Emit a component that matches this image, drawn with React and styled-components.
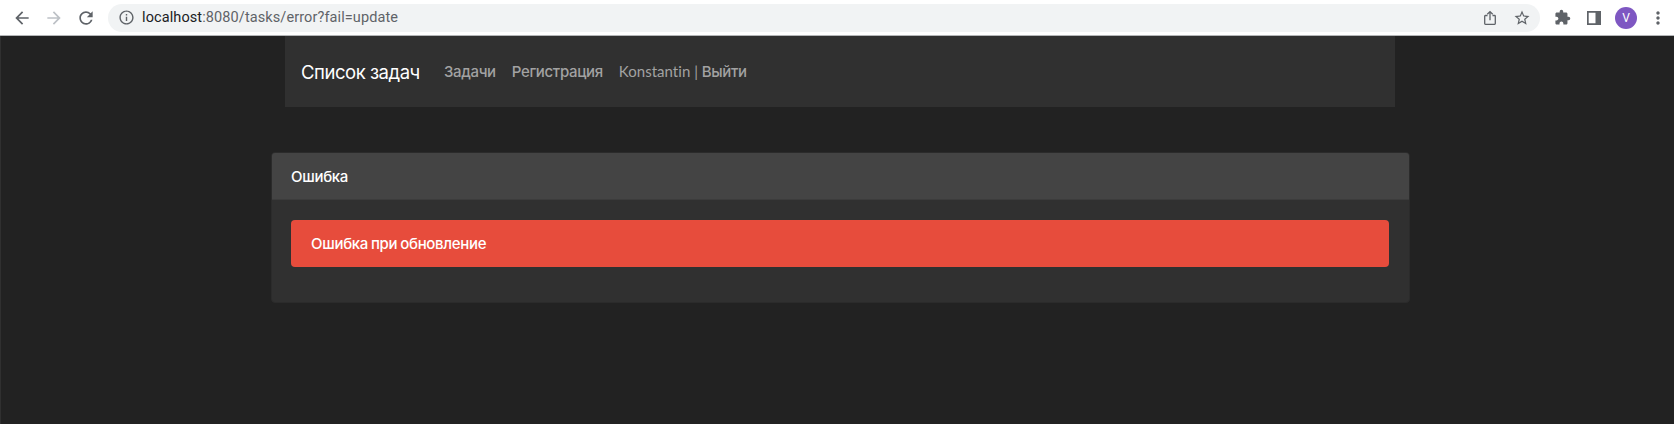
import React from 'react';
import styled, { createGlobalStyle } from 'styled-components';
import { MdArrowBack, MdArrowForward, MdRefresh, MdExtension, MdStarBorder, MdMoreVert, MdInfoOutline } from 'react-icons/md';

const GlobalStyle = createGlobalStyle`
  *, *::before, *::after { box-sizing: border-box; }
  body { margin: 0; background: #222; color: #fff; font-family: Inter, "Noto Sans", sans-serif; font-size: 15px; overflow: hidden; }
`;

const Window = styled.div`
  display: flex;
  flex-direction: column;
  height: 424px;
`;

const Toolbar = styled.header`
  display: flex;
  flex: none;
  align-items: center;
  height: 36px;
  padding: 0 6px 0 12px;
  background: #fff;
  border-bottom: 1px solid #b4b6b8;
  color: #5f6368;
`;

const ToolButton = styled.span`
  display: flex;
  flex: none;
  align-items: center;
  justify-content: center;
  width: ${(p) => p.$width || 32}px;
  height: 34px;
  color: ${(p) => p.$color || '#5f6368'};
  svg { display: block; }
`;

const AddressBar = styled.div`
  display: flex;
  flex: 1;
  align-items: center;
  height: 28px;
  margin-left: 12px;
  padding: 0 2px 0 9px;
  border-radius: 14px;
  background: #f1f3f4;
`;

const Url = styled.span`
  flex: 1;
  margin-left: 7px;
  font: 14.5px/20px Roboto, sans-serif;
  letter-spacing: 0.1px;
  color: #5f6368;
  b { font-weight: 400; color: #202124; }
`;

const Avatar = styled.span`
  display: grid;
  place-items: center;
  width: 22px;
  height: 22px;
  border-radius: 50%;
  background: #7e57c2;
  color: #fff;
  font: 12px/22px Roboto, sans-serif;
`;

const Page = styled.main`
  flex: 1;
  border-left: 1px solid #303030;
  background: #222;
`;

const Navbar = styled.nav`
  display: flex;
  align-items: center;
  width: 1110px;
  height: 70.5px;
  margin-left: 284px;
  padding: 2px 0 0 16px;
  background: #303030;
`;

const Brand = styled.a`
  width: 143px;
  font-size: 18.5px;
  line-height: 28px;
  letter-spacing: -0.47px;
  white-space: nowrap;
`;

const NavLink = styled.a`
  margin-right: 16px;
  color: #a2a2a2;
  font-weight: 450;
  white-space: nowrap;
  line-height: 24px;
  letter-spacing: -0.35px;
`;

const Latin = styled.span`
  font-family: Lato, sans-serif;
  font-size: 15px;
  font-weight: 400;
  line-height: 1;
  font-variant-ligatures: none;
  letter-spacing: 0.03px;
`;

const Card = styled.section`
  width: 1139px;
  height: 151px;
  margin: 45.5px 0 0 269.5px;
  border: 1px solid #2b2b2b;
  border-radius: 4px;
  background: #303030;
  overflow: hidden;
`;

const CardHeader = styled.h1`
  height: 47px;
  margin: 0;
  padding: 0 19.5px;
  background: #444;
  font-size: 15px;
  font-weight: 450;
  line-height: 48px;
  letter-spacing: -0.3px;
  border-bottom: 1px solid #3c3c3c;
`;

const CardBody = styled.div`
  padding: 20px 19.5px;
`;

const Alert = styled.div`
  height: 46.5px;
  padding: 0 20px;
  border-radius: 4px;
  background: #e74c3c;
  font-size: 15px;
  font-weight: 450;
  line-height: 47px;
  letter-spacing: -0.3px;
  word-spacing: -0.8px;
`;

const ShareIcon = () => (
  <svg width="14" height="16" viewBox="0 0 14 16" fill="none" stroke="currentColor" strokeWidth="1.3">
    <path d="M4.5 5.5H2.4q-.7 0-.7.7v7.4q0 .7.7.7h9.2q.7 0 .7-.7V6.200q0-.7-.7-.7H9.500M7 10.2V1.800M4.300 4.300 7 1.600l2.700 2.700" />
  </svg>
);

const PanelIcon = () => (
  <svg width="14" height="14" viewBox="0 0 14 14" fill="currentColor">
    <path d="M0 0h14v14H0zM1.7 1.7v10.6h6.8V1.7z" fillRule="evenodd" />
  </svg>
);

export default function App() {
  return (
    <Window>
      <GlobalStyle />
      <Toolbar>
        <ToolButton $width={20}><MdArrowBack size={20} /></ToolButton>
        <ToolButton $width={44} $color="#bdc1c6"><MdArrowForward size={20} /></ToolButton>
        <ToolButton $width={20}><MdRefresh size={20} /></ToolButton>
        <AddressBar>
          <ToolButton $width={18}><MdInfoOutline size={17} /></ToolButton>
          <Url><b>localhost</b>:8080/tasks/error?fail=update</Url>
          <ToolButton><ShareIcon /></ToolButton>
          <ToolButton><MdStarBorder size={18} /></ToolButton>
        </AddressBar>
        <ToolButton $width={44}><MdExtension size={17} /></ToolButton>
        <ToolButton $width={20}><PanelIcon /></ToolButton>
        <ToolButton $width={44}><Avatar>V</Avatar></ToolButton>
        <ToolButton $width={20}><MdMoreVert size={20} /></ToolButton>
      </Toolbar>
      <Page>
        <Navbar>
          <Brand>Список задач</Brand>
          <NavLink>Задачи</NavLink>
          <NavLink>Регистрация</NavLink>
          <NavLink><Latin>Konstantin | </Latin>Выйти</NavLink>
        </Navbar>
        <Card>
          <CardHeader>Ошибка</CardHeader>
          <CardBody>
            <Alert>Ошибка при обновление</Alert>
          </CardBody>
        </Card>
      </Page>
    </Window>
  );
}
